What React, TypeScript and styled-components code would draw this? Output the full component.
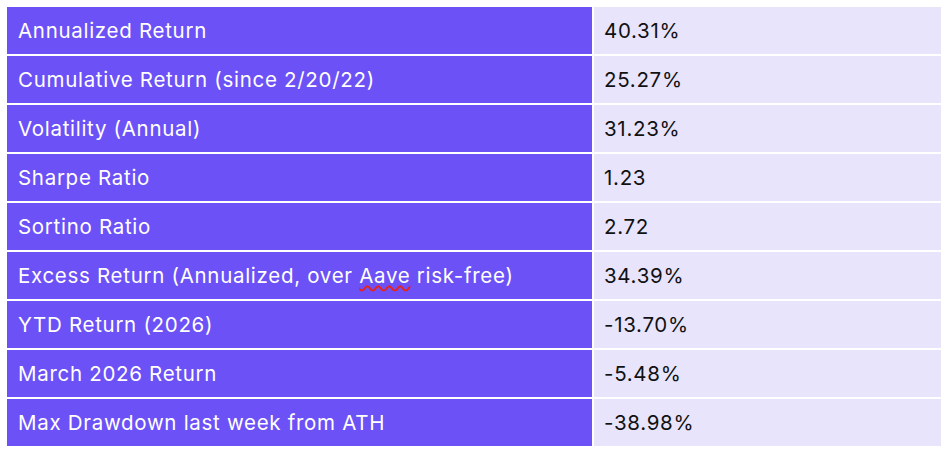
import React from "react";
import styled, { createGlobalStyle } from "styled-components";

const Global = createGlobalStyle`
  html, body { margin: 0; padding: 0; background: #ffffff; }
  body { font-family: Inter, "Noto Sans", sans-serif; }
`;

const Page = styled.div`
  padding: 5px;
`;

const Table = styled.table`
  border-collapse: separate;
  border-spacing: 2px;
  width: 938px;
  table-layout: fixed;
`;

const LabelCell = styled.td`
  width: 585px;
  height: 47px;
  box-sizing: border-box;
  padding: 0 10px 1px 11px;
  background: #6c51f6;
  color: #ffffff;
  font-size: 20.5px;
  letter-spacing: 0.7px;
  vertical-align: middle;
  white-space: nowrap;
`;

const ValueCell = styled.td`
  height: 47px;
  box-sizing: border-box;
  padding: 0 10px 1px 10px;
  background: #e8e4fc;
  color: #111111;
  font-size: 20.5px;
  letter-spacing: 0.7px;
  vertical-align: middle;
  white-space: nowrap;
`;

const Squiggle = styled.span`
  text-decoration-line: underline;
  text-decoration-style: wavy;
  text-decoration-color: #e8221a;
  text-decoration-thickness: 1.5px;
  text-decoration-skip-ink: none;
  text-underline-offset: 2px;
`;

const rows: { label: React.ReactNode; value: string }[] = [
  { label: "Annualized Return", value: "40.31%" },
  { label: "Cumulative Return (since 2/20/22)", value: "25.27%" },
  { label: "Volatility (Annual)", value: "31.23%" },
  { label: "Sharpe Ratio", value: "1.23" },
  { label: "Sortino Ratio", value: "2.72" },
  {
    label: (
      <>
        Excess Return (Annualized, over <Squiggle>Aave</Squiggle> risk-free)
      </>
    ),
    value: "34.39%",
  },
  { label: "YTD Return (2026)", value: "-13.70%" },
  { label: "March 2026 Return", value: "-5.48%" },
  { label: "Max Drawdown last week from ATH", value: "-38.98%" },
];

export default function App() {
  return (
    <Page>
      <Global />
      <Table>
        <tbody>
          {rows.map((r, i) => (
            <tr key={i}>
              <LabelCell>{r.label}</LabelCell>
              <ValueCell>{r.value}</ValueCell>
            </tr>
          ))}
        </tbody>
      </Table>
    </Page>
  );
}
